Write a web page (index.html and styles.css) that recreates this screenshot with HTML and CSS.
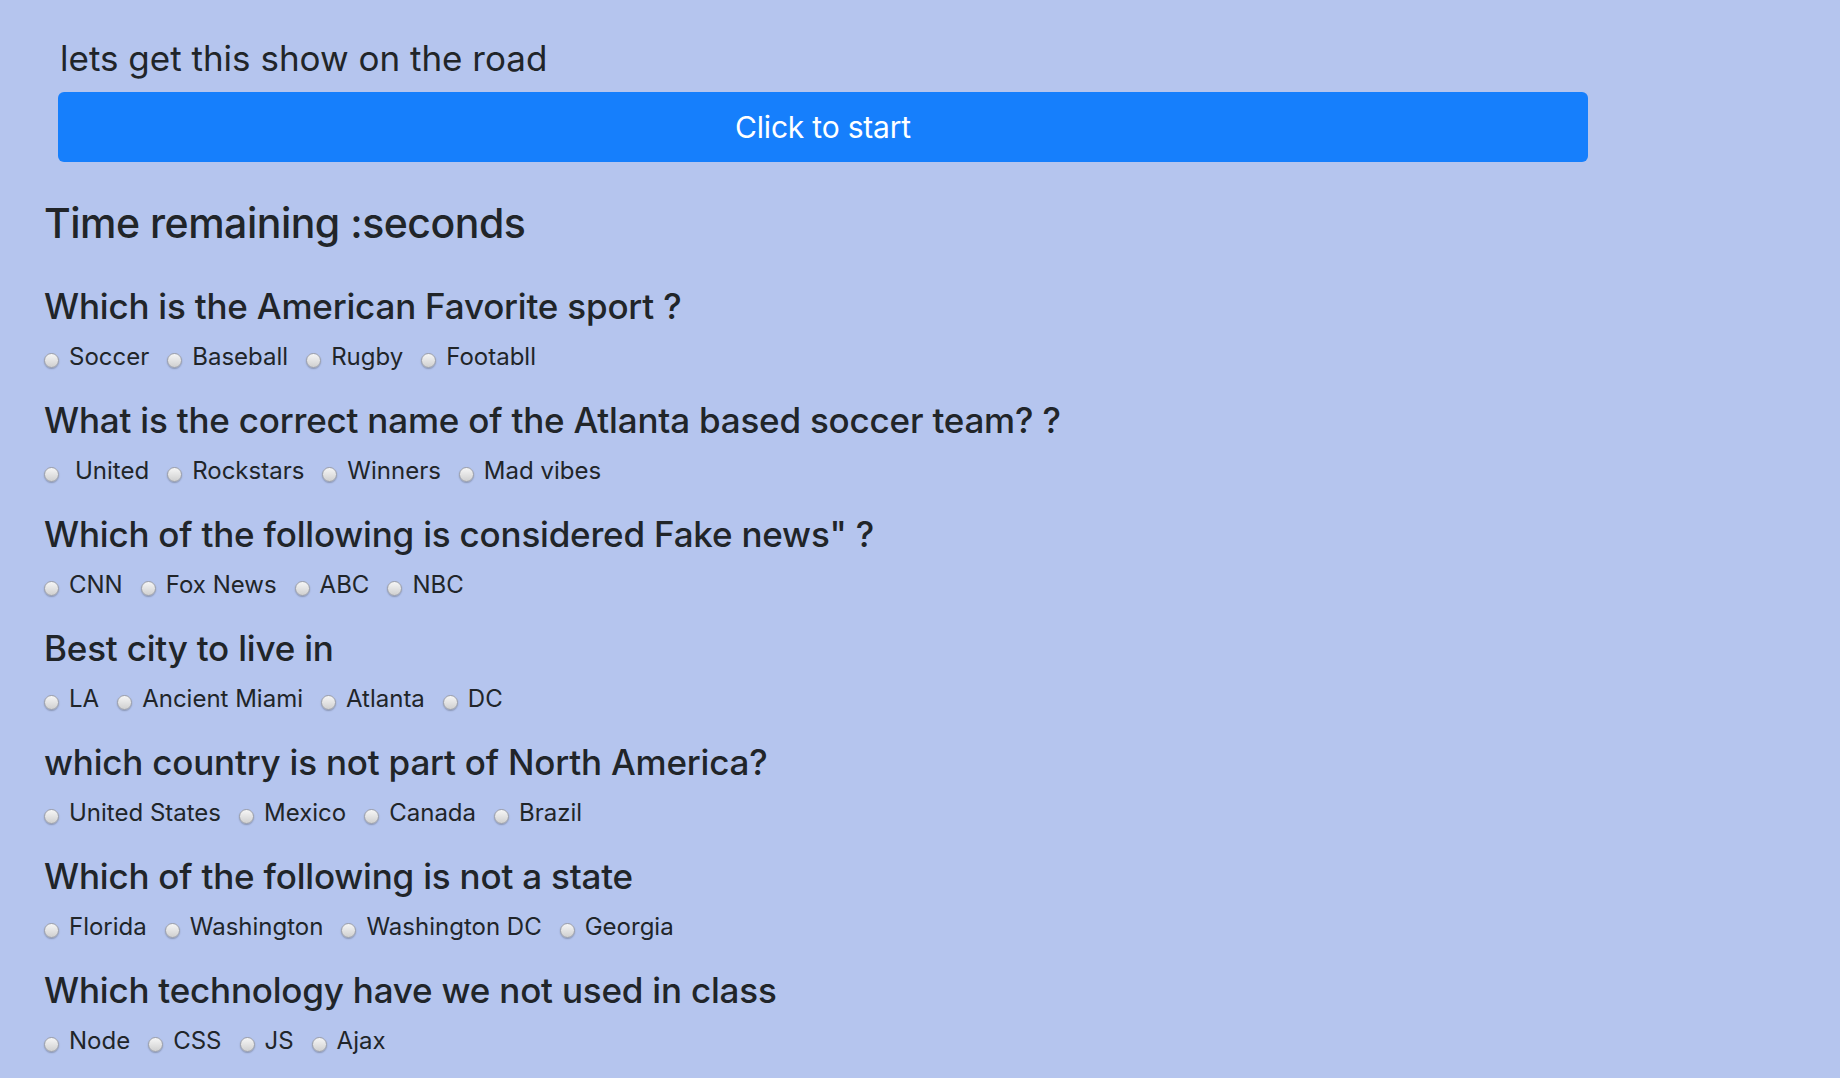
FILE: index.html
```html
<!DOCTYPE html>
<html>
<head>
<meta charset="utf-8">
<link rel="stylesheet" href="styles.css">
</head>
<body>
<div class="page">
  <div class="intro">
    <p class="lead">lets get this show on the road</p>
    <button class="start">Click to start</button>
  </div>
  <h2 class="timer">Time remaining :seconds</h2>
  <div class="quiz">
    <div class="q">
      <h3 class="qt">Which is the American Favorite sport ?</h3>
      <div class="opts">
        <label class="opt"><input type="radio" name="q1"><span>Soccer</span></label>
        <label class="opt"><input type="radio" name="q1"><span>Baseball</span></label>
        <label class="opt"><input type="radio" name="q1"><span>Rugby</span></label>
        <label class="opt"><input type="radio" name="q1"><span>Footabll</span></label>
      </div>
    </div>
    <div class="q">
      <h3 class="qt">What is the correct name of the Atlanta based soccer team? ?</h3>
      <div class="opts">
        <label class="opt"><input type="radio" name="q2"><span class="pad">United</span></label>
        <label class="opt"><input type="radio" name="q2"><span>Rockstars</span></label>
        <label class="opt"><input type="radio" name="q2"><span>Winners</span></label>
        <label class="opt"><input type="radio" name="q2"><span>Mad vibes</span></label>
      </div>
    </div>
    <div class="q">
      <h3 class="qt">Which of the following is considered Fake news" ?</h3>
      <div class="opts">
        <label class="opt"><input type="radio" name="q3"><span>CNN</span></label>
        <label class="opt"><input type="radio" name="q3"><span>Fox News</span></label>
        <label class="opt"><input type="radio" name="q3"><span>ABC</span></label>
        <label class="opt"><input type="radio" name="q3"><span>NBC</span></label>
      </div>
    </div>
    <div class="q">
      <h3 class="qt">Best city to live in</h3>
      <div class="opts">
        <label class="opt"><input type="radio" name="q4"><span>LA</span></label>
        <label class="opt"><input type="radio" name="q4"><span>Ancient Miami</span></label>
        <label class="opt"><input type="radio" name="q4"><span>Atlanta</span></label>
        <label class="opt"><input type="radio" name="q4"><span>DC</span></label>
      </div>
    </div>
    <div class="q">
      <h3 class="qt">which country is not part of North America?</h3>
      <div class="opts">
        <label class="opt"><input type="radio" name="q5"><span>United States</span></label>
        <label class="opt"><input type="radio" name="q5"><span>Mexico</span></label>
        <label class="opt"><input type="radio" name="q5"><span>Canada</span></label>
        <label class="opt"><input type="radio" name="q5"><span>Brazil</span></label>
      </div>
    </div>
    <div class="q">
      <h3 class="qt">Which of the following is not a state</h3>
      <div class="opts">
        <label class="opt"><input type="radio" name="q6"><span>Florida</span></label>
        <label class="opt"><input type="radio" name="q6"><span>Washington</span></label>
        <label class="opt"><input type="radio" name="q6"><span>Washington DC</span></label>
        <label class="opt"><input type="radio" name="q6"><span>Georgia</span></label>
      </div>
    </div>
    <div class="q">
      <h3 class="qt">Which technology have we not used in class</h3>
      <div class="opts">
        <label class="opt"><input type="radio" name="q7"><span>Node</span></label>
        <label class="opt"><input type="radio" name="q7"><span>CSS</span></label>
        <label class="opt"><input type="radio" name="q7"><span>JS</span></label>
        <label class="opt"><input type="radio" name="q7"><span>Ajax</span></label>
      </div>
    </div>
  </div>
</div>
</body>
</html>
```
FILE: styles.css
```css
html, body {
  margin: 0;
  padding: 0;
}
body {
  background: #b5c5ee;
  color: #212529;
  font-family: Inter, "Noto Sans", sans-serif;
  height: 1078px;
  overflow: hidden;
}
.page {
  padding: 36px 0 0 44px;
}
.intro {
  display: flex;
  flex-direction: column;
  align-items: flex-start;
  padding-left: 14px;
}
.lead {
  margin: 0 0 0 2px;
  font-size: 35px;
  line-height: 44px;
  letter-spacing: 0;
}
.start {
  margin-top: 12px;
  width: 1530px;
  height: 70px;
  border: none;
  border-radius: 6px;
  background: #167ffc;
  color: #fff;
  font-family: inherit;
  font-size: 30px;
  letter-spacing: -0.2px;
  padding: 0;
}
.timer {
  margin: 35px 0 0 0;
  font-size: 41px;
  font-weight: 500;
  line-height: 52px;
  letter-spacing: -0.5px;
}
.quiz {
  display: flex;
  flex-direction: column;
  margin-top: 35px;
}
.q {
  height: 114px;
}
.qt {
  margin: 0;
  font-size: 35px;
  font-weight: 500;
  line-height: 44px;
  letter-spacing: -0.2px;
}
.opts {
  display: flex;
  align-items: baseline;
  gap: 18px;
  margin-top: 12px;
}
.opt {
  display: flex;
  align-items: baseline;
  font-size: 24px;
  line-height: 34px;
  letter-spacing: 0;
}
.opt input {
  appearance: none;
  -webkit-appearance: none;
  width: 15px;
  height: 15px;
  margin: 0 10px 0 0;
  border-radius: 50%;
  border: 1px solid #9c9fa8;
  background: linear-gradient(#f6f6f6, #d0d0d0);
  box-shadow: 0 1px 1.5px rgba(0,0,0,0.25);
  position: relative;
  top: 3px;
}
.opt .pad {
  margin-left: 6px;
}
```
